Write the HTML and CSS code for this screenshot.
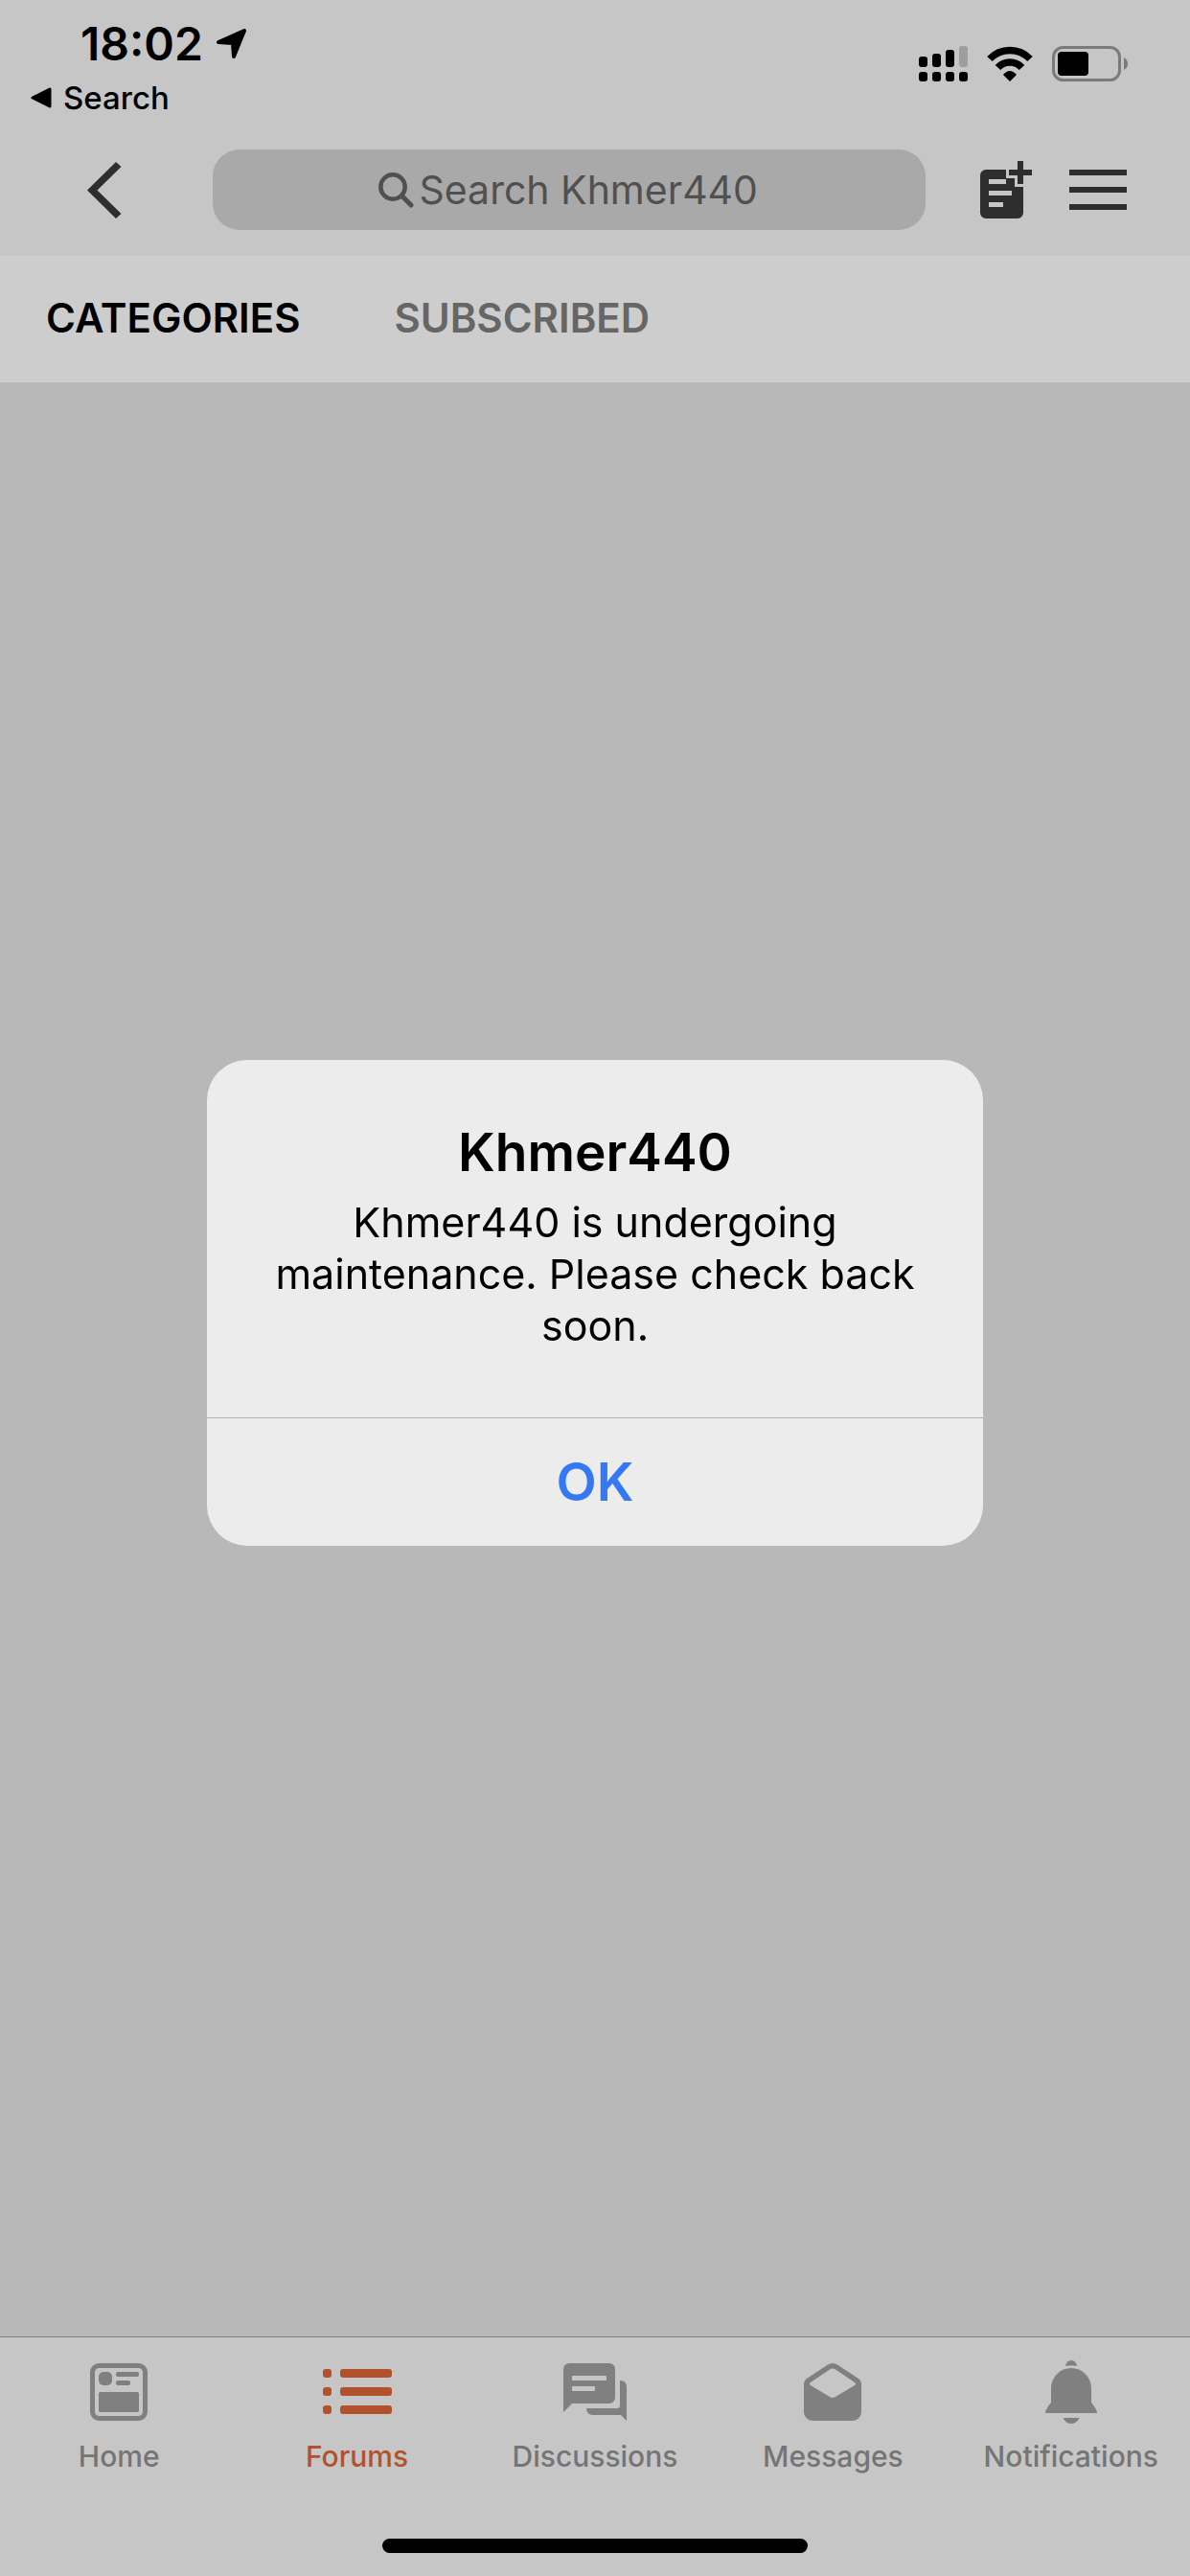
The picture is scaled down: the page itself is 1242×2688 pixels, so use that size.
FILE: index.html
```html
<!DOCTYPE html>
<html lang="en">
<head>
  <meta charset="UTF-8">
  <meta name="viewport" content="width=device-width, initial-scale=1">
  <title>Khmer440</title>
  <link rel="stylesheet" href="styles.css">
</head>
<body>
  <header class="header">
    <div class="status">
      <div class="status-left">
        <div class="clock">
          <span>18:02</span>
          <svg width="33" height="34" viewBox="0 0 33 34"><path d="M2 15 29 3 18 30 17 16Z" fill="#000" stroke="#000" stroke-width="4" stroke-linejoin="round"/></svg>
        </div>
        <a href="#" class="return-link">
          <svg width="22" height="22" viewBox="0 0 22 22"><path d="M2 11 20 2V20Z" fill="#000" stroke="#000" stroke-width="3" stroke-linejoin="round"/></svg>
          Search
        </a>
      </div>
      <div class="status-icons">
        <svg width="51" height="37" viewBox="0 0 51 37">
          <rect x="0" y="11" width="9" height="11" rx="3"/>
          <rect x="14" y="8" width="9" height="14" rx="3"/>
          <rect x="28" y="4" width="9" height="18" rx="3"/>
          <rect x="42" y="0" width="9" height="22" rx="3" fill="#9e9e9e"/>
          <rect x="0" y="27" width="9" height="10" rx="3"/>
          <rect x="14" y="27" width="9" height="10" rx="3"/>
          <rect x="28" y="27" width="9" height="10" rx="3"/>
          <rect x="42" y="27" width="9" height="10" rx="3"/>
        </svg>
        <svg width="48" height="37" viewBox="0 0 48 37">
          <path d="M3 13.5A29 29 0 0 1 45 13.5" fill="none" stroke="#000" stroke-width="7.5"/>
          <path d="M11.5 22.5A17 17 0 0 1 36.500 22.5" fill="none" stroke="#000" stroke-width="7.5"/>
          <path d="M24 37 17 30Q24 22 31 30Z"/>
        </svg>
        <svg width="79" height="37" viewBox="0 0 79 37">
          <rect x="1.500" y="1.500" width="69" height="34" rx="10" fill="none" stroke="#7b7b7b" stroke-width="3"/>
          <rect x="6" y="6" width="32" height="25" rx="4"/>
          <path d="M75 12Q79 14 79 18.500T75 25Z" fill="#7b7b7b"/>
        </svg>
      </div>
    </div>
    <div class="nav">
      <button class="icon-btn" aria-label="Back">
        <svg width="36" height="59" viewBox="0 0 36 59"><path d="M30 0 35.500 5 10.500 29.500 35.500 54 30 59 0 29.500Z" fill="#2e2e2e"/></svg>
      </button>
      <label class="search">
        <svg width="37" height="37" viewBox="0 0 37 37" fill="none" stroke="#505050">
          <circle cx="15" cy="15" r="12.700" stroke-width="4.500"/>
          <path d="M24.500 24.500 34 34" stroke-width="5" stroke-linecap="round"/>
        </svg>
        <input type="text" class="search-input" placeholder="Search Khmer440" aria-label="Search Khmer440">
      </label>
      <div class="nav-actions">
        <button class="icon-btn" aria-label="New topic">
          <svg width="54" height="60" viewBox="0 0 54 60">
            <path fill="#2e2e2e" fill-rule="evenodd" d="M6 9H27V18H36V27H45V54a6 6 0 0 1-6 6H6a6 6 0 0 1-6-6V15a6 6 0 0 1 6-6ZM9 19V24H27V19ZM9 31V36H33V31ZM9 43V48H24V43Z"/>
            <path fill="#2e2e2e" d="M39 0H45V9H54V15H45V24H39V15H30V9H39Z"/>
          </svg>
        </button>
        <button class="icon-btn" aria-label="Menu">
          <svg width="60" height="42" viewBox="0 0 60 42"><path fill="#2e2e2e" d="M0 0H60V6H0ZM0 18H60V24H0ZM0 36H60V42H0Z"/></svg>
        </button>
      </div>
    </div>
  </header>

  <nav class="tabs">
    <a href="#" class="tab active">CATEGORIES</a>
    <a href="#" class="tab">SUBSCRIBED</a>
  </nav>

  <main class="content"></main>

  <footer class="footer">
    <nav class="tabbar">
      <a href="#" class="tabbar-item">
        <svg width="60" height="66" viewBox="0 -3 60 66" fill="currentColor">
          <rect x="2.500" y="2.500" width="55" height="55" rx="7" fill="none" stroke="currentColor" stroke-width="5"/>
          <rect x="9" y="9" width="14" height="14" rx="5"/>
          <rect x="27" y="9" width="24" height="5" rx="2"/>
          <rect x="27" y="18" width="15" height="5" rx="2"/>
          <rect x="9" y="30" width="42" height="21" rx="1.500"/>
        </svg>
        <span>Home</span>
      </a>
      <a href="#" class="tabbar-item active">
        <svg width="72" height="66" viewBox="0 -9 72 66" fill="currentColor">
          <rect x="0" y="0" width="9" height="9" rx="3"/>
          <rect x="18" y="0" width="54" height="9" rx="3"/>
          <rect x="0" y="19" width="9" height="9" rx="3"/>
          <rect x="18" y="19" width="54" height="9" rx="3"/>
          <rect x="0" y="38" width="9" height="9" rx="3"/>
          <rect x="18" y="38" width="54" height="9" rx="3"/>
        </svg>
        <span>Forums</span>
      </a>
      <a href="#" class="tabbar-item">
        <svg width="66" height="66" viewBox="0 -3 66 66" fill="currentColor">
          <path fill-rule="evenodd" d="M6 0H48a6 6 0 0 1 6 6V36a6 6 0 0 1-6 6H9L0 51V6a6 6 0 0 1 6-6ZM10 13a1 1 0 0 0-1 1v3a1 1 0 0 0 1 1H44a1 1 0 0 0 1-1V14a1 1 0 0 0-1-1ZM10 24a1 1 0 0 0-1 1v3a1 1 0 0 0 1 1H32a1 1 0 0 0 1-1V25a1 1 0 0 0-1-1Z"/>
          <path d="M59 18Q66 18 66 25V60L60 54H31Q24 54 24 47H56Q59 47 59 44Z"/>
        </svg>
        <span>Discussions</span>
      </a>
      <a href="#" class="tabbar-item">
        <svg width="60" height="66" viewBox="0 -3 60 66" fill="currentColor">
          <path fill-rule="evenodd" d="M0 21Q0 18 3 16L25 1.500Q30-1.500 35 1.500L57 16Q60 18 60 21V51a9 9 0 0 1-9 9H9a9 9 0 0 1-9-9ZM7 20Q5 21.500 7 23L27 35Q30 37 33 35L53 23Q55 21.500 53 20L33 6.500Q30 4.500 27 6.500Z"/>
        </svg>
        <span>Messages</span>
      </a>
      <a href="#" class="tabbar-item">
        <svg width="54" height="66" viewBox="0 0 54 66" fill="currentColor">
          <path d="M21 6Q22 0 27 0T33 6Q27 4.500 21 6Z"/>
          <path d="M6 29a21 21 0 0 1 42 0V44Q54 51 54 55H0Q0 51 6 44Z"/>
          <path d="M18.500 60H35.500Q32.500 66 27 66T18.500 60Z"/>
        </svg>
        <span>Notifications</span>
      </a>
    </nav>
    <div class="home-indicator"></div>
  </footer>

  <div class="overlay">
    <div class="alert" role="alertdialog" aria-labelledby="alert-title" aria-describedby="alert-text">
      <div class="alert-body">
        <h1 id="alert-title" class="alert-title">Khmer440</h1>
        <p id="alert-text" class="alert-text">Khmer440 is undergoing maintenance. Please check back soon.</p>
      </div>
      <button class="alert-btn">OK</button>
    </div>
  </div>
</body>
</html>
```
FILE: styles.css
```css
* {
  box-sizing: border-box;
}
body {
  margin: 0;
  min-height: 100vh;
  display: flex;
  flex-direction: column;
  font-family: Inter, "Liberation Sans", sans-serif;
  background: #b8b8b8;
  color: #000;
}
svg {
  display: block;
  flex-shrink: 0;
}
a {
  color: inherit;
  text-decoration: none;
}
button {
  border: 0;
  padding: 0;
  background: none;
  font-family: inherit;
}

/* header */
.header {
  background: #c6c6c6;
}
.status {
  display: flex;
  justify-content: space-between;
  height: 129px;
  padding: 18px 65px 0 32px;
}
.clock {
  display: flex;
  align-items: center;
  gap: 14px;
  padding-left: 52px;
  font-size: 48px;
  font-weight: 600;
  line-height: 56px;
}
.return-link {
  display: flex;
  align-items: center;
  gap: 12px;
  margin-top: 4px;
  font-size: 33px;
  font-weight: 500;
  line-height: 48px;
}
.status-icons {
  display: flex;
  gap: 20px;
  padding-top: 30px;
}
.nav {
  display: flex;
  align-items: center;
  height: 138px;
  padding: 0 66px 0 91px;
}
.search {
  flex: 1;
  display: flex;
  align-items: center;
  justify-content: center;
  gap: 6px;
  height: 84px;
  margin: 0 57px 0 95px;
  border-radius: 28px;
  background: #a9a9a9;
}
.search-input {
  width: 356px;
  border: 0;
  padding: 0;
  outline: 0;
  background: none;
  font-family: inherit;
  font-size: 41px;
  color: #505050;
}
.search-input::placeholder {
  color: #505050;
  opacity: 1;
}
.nav-actions {
  display: flex;
  align-items: center;
  gap: 39px;
}

/* tabs */
.tabs {
  display: flex;
  align-items: center;
  gap: 98px;
  height: 132px;
  padding: 0 48px 4px;
  background: #cdcdcd;
  font-size: 42px;
  font-weight: 600;
}
.tab {
  color: #666;
}
.tab.active {
  color: #000;
}
.content {
  flex: 1;
}

/* bottom bar */
.footer {
  border-top: 1px solid #808080;
  background: #c6c6c6;
  padding-bottom: 24px;
}
.tabbar {
  display: grid;
  grid-template-columns: repeat(5, 1fr);
  padding-top: 24px;
}
.tabbar-item {
  display: flex;
  flex-direction: column;
  align-items: center;
  gap: 16px;
  color: #808080;
  font-size: 30px;
  font-weight: 500;
  line-height: 36px;
}
.tabbar-item span {
  color: #757575;
}
.tabbar-item.active,
.tabbar-item.active span {
  color: #b2522c;
}
.home-indicator {
  width: 444px;
  height: 15px;
  margin: 68px auto 0;
  border-radius: 8px;
  background: #000;
}

/* alert */
.overlay {
  position: fixed;
  inset: 0;
  display: flex;
  align-items: center;
  justify-content: center;
  padding: 30px 24px 0;
}
.alert {
  width: 810px;
  max-width: 100%;
  border-radius: 42px;
  overflow: hidden;
  background: #ececec;
  text-align: center;
}
.alert-body {
  padding: 60px 48px 69px;
}
.alert-title {
  margin: 0 0 10px;
  font-size: 55px;
  font-weight: 600;
  line-height: 72px;
}
.alert-text {
  margin: 0;
  font-size: 43px;
  line-height: 54px;
}
.alert-btn {
  display: block;
  width: 100%;
  height: 134px;
  border-top: 1px solid #b0b0b0;
  font-size: 55px;
  font-weight: 600;
  color: #3478f6;
}
```
